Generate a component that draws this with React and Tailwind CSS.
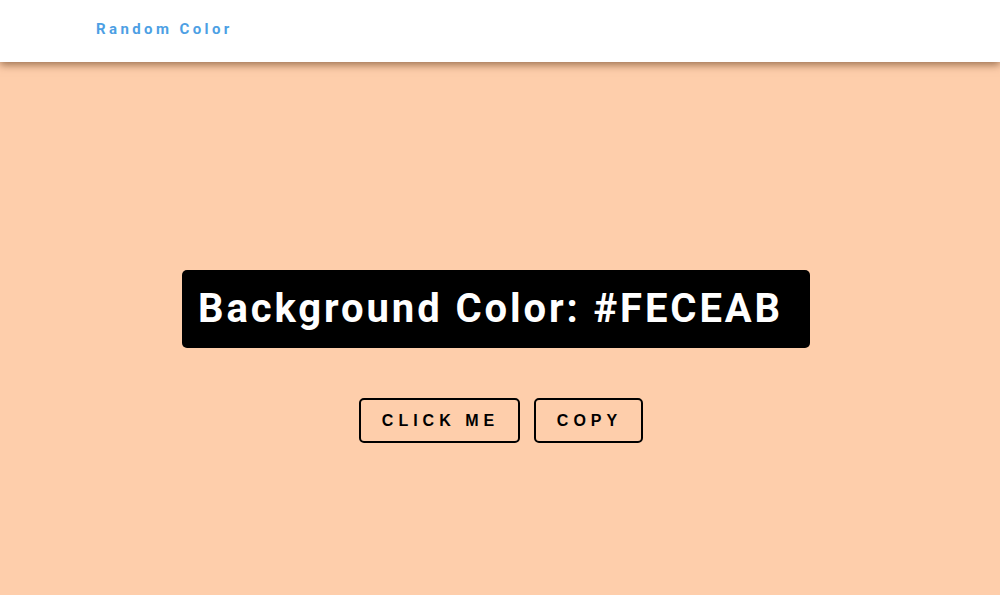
export default function App() {
  return (
    <div className="min-h-[595px] w-full bg-[#FECEAB] flex flex-col" style={{ fontFamily: "Roboto, 'Liberation Sans', sans-serif" }}>
      <header className="h-[62px] bg-white flex items-center pl-[96px] pb-[4px] shadow-[0_3px_8px_rgba(80,40,10,0.55)] relative z-10">
        <span className="text-[15px] font-bold tracking-[3.4px] text-[#4d9fe4] leading-none">Random Color</span>
      </header>
      <main className="flex flex-col items-center pt-[208px]">
        <div className="bg-black rounded-[5px] h-[78px] w-[628px] flex items-center pl-[16px] ml-[-8px]">
          <h1 className="text-white text-[40px] font-bold tracking-[2.9px] leading-none whitespace-nowrap">Background Color: #FECEAB</h1>
        </div>
        <div className="flex gap-[14px] mt-[50px] ml-[2px]">
          <button className="w-[161px] h-[45px] border-2 border-black rounded-[5px] text-[16px] font-bold tracking-[5px] text-black flex items-center justify-center pl-[2px]" style={{ fontFamily: "'Liberation Sans', Arial, sans-serif" }}>CLICK ME</button>
          <button className="w-[109px] h-[45px] border-2 border-black rounded-[5px] text-[16px] font-bold tracking-[5px] text-black flex items-center justify-center pl-[2px]" style={{ fontFamily: "'Liberation Sans', Arial, sans-serif" }}>COPY</button>
        </div>
      </main>
    </div>
  );
}
